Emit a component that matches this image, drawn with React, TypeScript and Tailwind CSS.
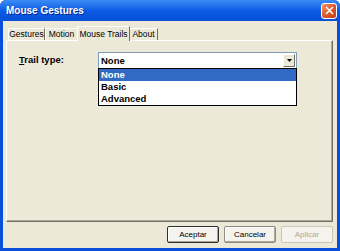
import React from 'react';

const tabs = [
    { label: 'Gestures', w: 'w-[37px]' },
    { label: 'Motion', w: 'w-[33px]' },
    { label: 'Mouse Trails', w: 'w-[53px]', active: true },
    { label: 'About', w: 'w-[29px]' },
];

const App = () => {
    return (
        <div className="w-[340px] h-[251px] bg-[#0A4FDB] rounded-t-[6px] overflow-hidden flex flex-col font-['Liberation_Sans',Arial,sans-serif]">
            {/* title bar */}
            <div className="h-[21px] shrink-0 flex items-center justify-between pl-[6px] pr-[3px] bg-gradient-to-b from-[#3D8BF5] via-[#0A5BE6] to-[#0650D6]">
                <span className="text-white font-bold text-[10px] leading-none [text-shadow:1px_1px_0_#0A2A8F]">Mouse Gestures</span>
                <div className="w-[16px] h-[16px] rounded-[3px] border border-white bg-gradient-to-br from-[#F3936A] via-[#DE5A2E] to-[#C2401B] flex items-center justify-center">
                    <svg width="9" height="9" viewBox="0 0 9 9">
                        <path d="M1.5 1.5 L7.5 7.5 M7.5 1.5 L1.5 7.5" stroke="white" strokeWidth="1.6" strokeLinecap="round" />
                    </svg>
                </div>
            </div>

            {/* dialog body */}
            <div className="flex-1 mx-[3px] mb-[3px] bg-[#ECE9D8] flex flex-col">
                {/* tab strip */}
                <div className="flex items-end pl-[5px] pt-[5px] h-[20px]">
                    {tabs.map((t) => (
                        <div
                            key={t.label}
                            className={
                                t.active
                                    ? `${t.w} h-[15px] -mx-[1px] relative z-10 bg-[#ECE9D8] border-t border-l border-white border-r border-r-[#716F64] flex items-center justify-center text-[8.5px] text-black leading-none`
                                    : `${t.w} h-[13px] bg-[#ECE9D8] border-t border-l border-white border-r border-r-[#716F64] border-b border-b-white flex items-center justify-center text-[8.5px] text-black leading-none`
                            }
                        >
                            {t.label}
                        </div>
                    ))}
                </div>

                {/* tab panel */}
                <div className="ml-[3px] mr-[4px] h-[182px] border-t border-l border-white border-r border-r-[#716F64] border-b border-b-[#716F64] shadow-[inset_-1px_-1px_0_#ACA899] -mt-[1px]">
                    <div className="flex items-start pt-[11px] pl-[12px]">
                        <span className="w-[79px] pt-[3px] text-[9.5px] font-bold text-black leading-none">
                            <span className="underline">T</span>rail type:
                        </span>
                        <div className="relative w-[199px]">
                            <div className="h-[17px] bg-white border border-[#7F9DB9] flex items-center pl-[2px] pr-[1px]">
                                <span className="flex-1 text-[9.5px] font-bold text-black leading-none">None</span>
                                <div className="w-[12px] h-[13px] bg-[#ECE9D8] border border-white border-r-[#716F64] border-b-[#716F64] flex items-center justify-center">
                                    <svg width="5" height="3" viewBox="0 0 5 3">
                                        <path d="M0 0 H5 L2.5 3 Z" fill="black" />
                                    </svg>
                                </div>
                            </div>
                            {/* open list */}
                            <div className="absolute left-0 top-[16px] w-[199px] bg-white border border-black flex flex-col text-[9.5px] font-bold leading-none z-20">
                                <div className="h-[12px] bg-[#316AC5] text-white flex items-center pl-[2px]">None</div>
                                <div className="h-[12px] text-black flex items-center pl-[2px]">Basic</div>
                                <div className="h-[12px] text-black flex items-center pl-[2px]">Advanced</div>
                            </div>
                        </div>
                    </div>
                </div>

                {/* buttons */}
                <div className="flex justify-end gap-[5px] mt-[4px] pr-[4px]">
                    <button className="w-[52px] h-[17px] rounded-[2px] bg-[#F4F3EE] border border-[#2F2F2F] shadow-[inset_-1px_-1px_0_#ACA899,inset_1px_1px_0_#fff] text-[8px] text-black leading-none">Aceptar</button>
                    <button className="w-[52px] h-[17px] rounded-[2px] bg-[#F4F3EE] border border-[#8E8C80] shadow-[inset_-1px_-1px_0_#ACA899,inset_1px_1px_0_#fff] text-[8px] text-black leading-none">Cancelar</button>
                    <button className="w-[52px] h-[17px] rounded-[2px] bg-[#F4F3EE] border border-[#C9C7BA] text-[8px] text-[#ACA899] leading-none">Aplicar</button>
                </div>
            </div>
        </div>
    );
};

export default App;
